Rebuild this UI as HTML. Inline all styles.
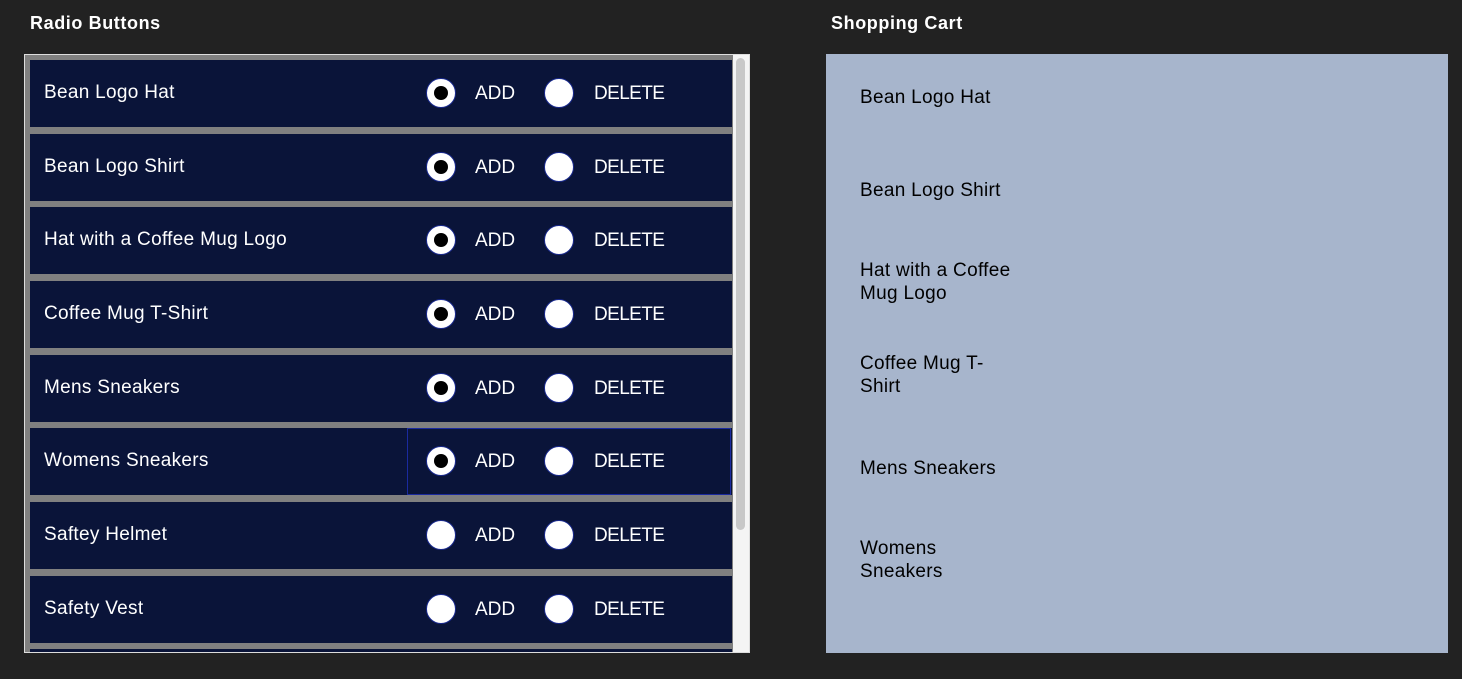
<!DOCTYPE html>
<html><head><meta charset="utf-8"><style>
html,body{margin:0;width:1462px;height:679px;overflow:hidden}
body{background:#222;font-family:"Liberation Sans","DejaVu Sans",sans-serif;position:relative}
.h{position:absolute;top:13px;color:#fff;font-weight:bold;font-size:18px;letter-spacing:0.6px}
.box{position:absolute;left:24px;top:54px;width:724px;height:597px;border:1px solid #ddd;background:#808080;overflow:hidden}
.row{position:absolute;left:5px;width:702px;height:67px;background:#0a1439;color:#fff;font-size:19px}
.row .n{position:absolute;left:14px;top:22px;letter-spacing:0.3px}
.r{position:absolute;top:18px;width:28px;height:28px;border-radius:50%;background:#fff;border:1px solid #1a2a8f}
.r.on::after{content:"";position:absolute;left:7px;top:7px;width:14px;height:14px;border-radius:50%;background:#000}
.t{position:absolute;top:23px}
.d{letter-spacing:-0.6px}
.sel{position:absolute;left:377px;top:0;width:322px;height:65px;border:1px solid #1a2a9f}
.sb{position:absolute;left:708px;top:0;width:16px;height:597px;background:#f4f4f4}
.th{position:absolute;left:3px;top:3px;width:9px;height:472px;background:#c8c8c8;border-radius:5px}
.cart{position:absolute;left:826px;top:54px;width:622px;height:599px;background:#a7b5cc}
.c{position:absolute;left:34px;font-size:19px;color:#000;line-height:23px;letter-spacing:0.3px}
</style></head><body>
<div class="h" style="left:30px">Radio Buttons</div>
<div class="h" style="left:831px">Shopping Cart</div>
<div class="box">
<div class="row" style="top:5px"><span class="n">Bean Logo Hat</span><div class="r on" style="left:396px"></div><span class="t" style="left:445px">ADD</span><div class="r" style="left:514px"></div><span class="t d" style="left:564px">DELETE</span></div>
<div class="row" style="top:79px"><span class="n">Bean Logo Shirt</span><div class="r on" style="left:396px"></div><span class="t" style="left:445px">ADD</span><div class="r" style="left:514px"></div><span class="t d" style="left:564px">DELETE</span></div>
<div class="row" style="top:152px"><span class="n">Hat with a Coffee Mug Logo</span><div class="r on" style="left:396px"></div><span class="t" style="left:445px">ADD</span><div class="r" style="left:514px"></div><span class="t d" style="left:564px">DELETE</span></div>
<div class="row" style="top:226px"><span class="n">Coffee Mug T-Shirt</span><div class="r on" style="left:396px"></div><span class="t" style="left:445px">ADD</span><div class="r" style="left:514px"></div><span class="t d" style="left:564px">DELETE</span></div>
<div class="row" style="top:300px"><span class="n">Mens Sneakers</span><div class="r on" style="left:396px"></div><span class="t" style="left:445px">ADD</span><div class="r" style="left:514px"></div><span class="t d" style="left:564px">DELETE</span></div>
<div class="row" style="top:373px"><div class="sel"></div><span class="n">Womens Sneakers</span><div class="r on" style="left:396px"></div><span class="t" style="left:445px">ADD</span><div class="r" style="left:514px"></div><span class="t d" style="left:564px">DELETE</span></div>
<div class="row" style="top:447px"><span class="n">Saftey Helmet</span><div class="r" style="left:396px"></div><span class="t" style="left:445px">ADD</span><div class="r" style="left:514px"></div><span class="t d" style="left:564px">DELETE</span></div>
<div class="row" style="top:521px"><span class="n">Safety Vest</span><div class="r" style="left:396px"></div><span class="t" style="left:445px">ADD</span><div class="r" style="left:514px"></div><span class="t d" style="left:564px">DELETE</span></div>
<div class="row" style="top:594px;height:3px"></div>
<div class="sb"><div class="th"></div></div>
</div>
<div class="cart">
<div class="c" style="top:32px">Bean Logo Hat</div>
<div class="c" style="top:125px">Bean Logo Shirt</div>
<div class="c" style="top:205px">Hat with a Coffee<br>Mug Logo</div>
<div class="c" style="top:298px">Coffee Mug T-<br>Shirt</div>
<div class="c" style="top:403px">Mens Sneakers</div>
<div class="c" style="top:483px">Womens<br>Sneakers</div>
</div>
</body></html>
